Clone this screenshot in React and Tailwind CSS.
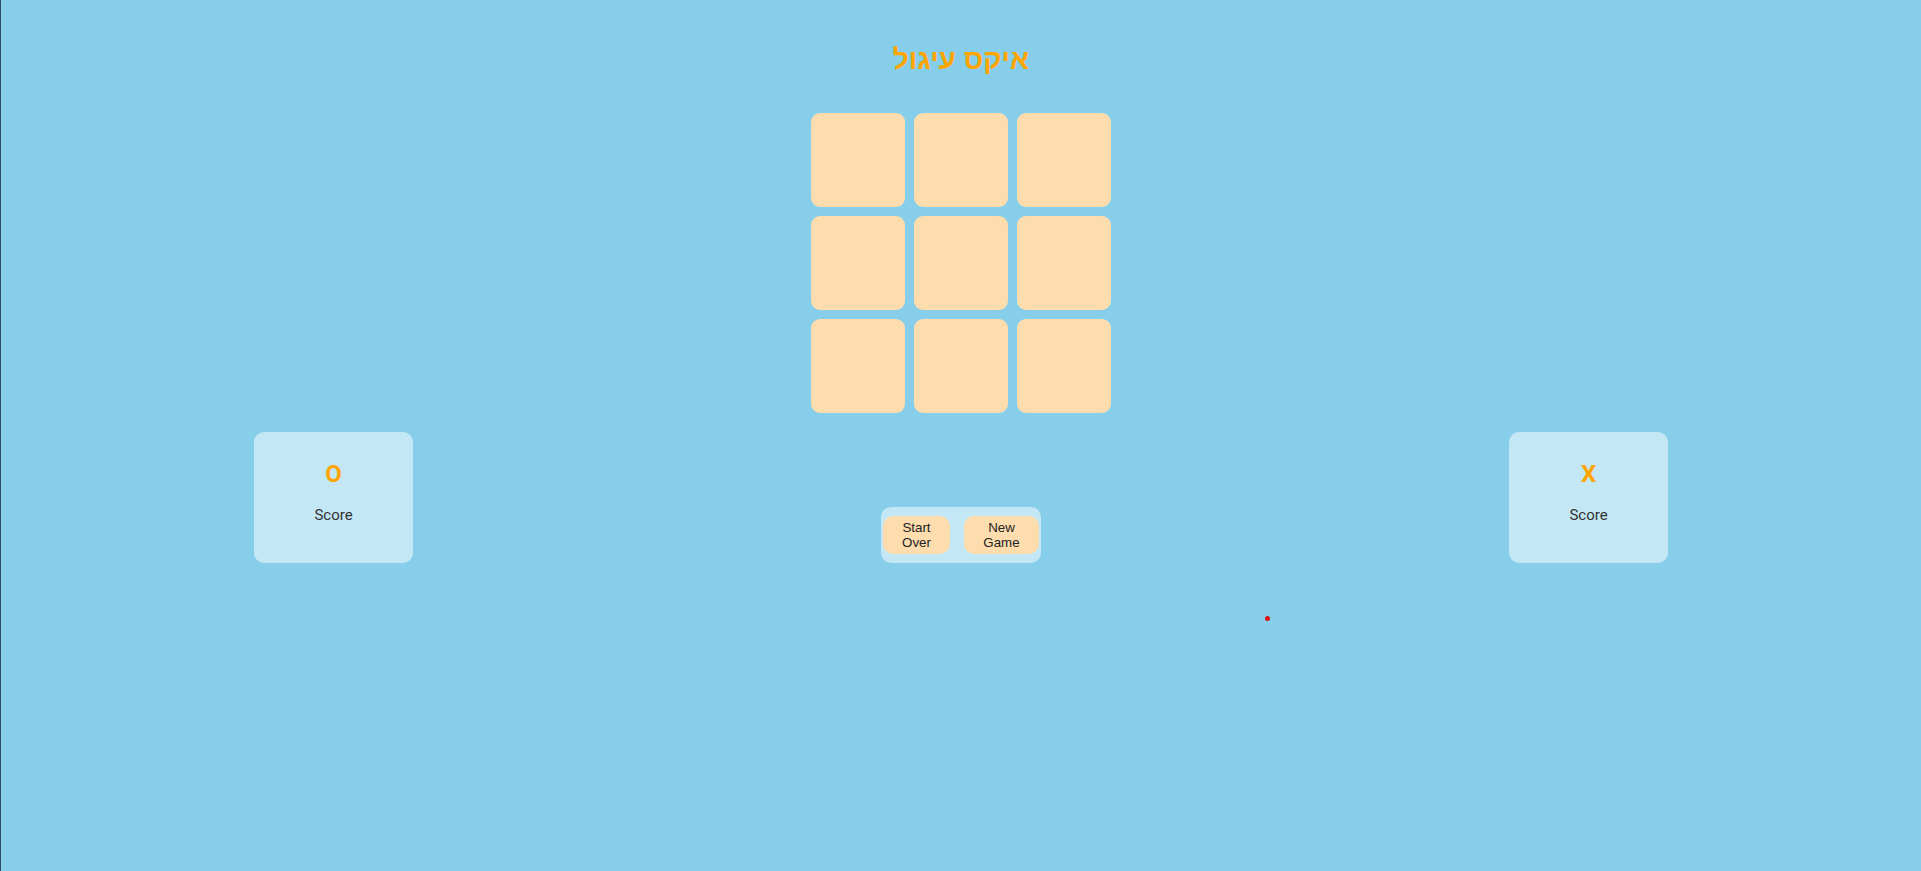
import React from 'react';

const cells = Array.from({ length: 9 });

const ScoreCard = ({ mark }) => (
  <div className="w-[159px] h-[131px] rounded-[10px] bg-white/50 flex flex-col items-center pt-[30px]">
    <div className="text-[24px] leading-[24px] font-bold text-[#FFA500] font-['Roboto',sans-serif]">{mark}</div>
    <div className="mt-[21px] text-[15px] leading-[16px] text-[#333] font-['Roboto',sans-serif]">Score</div>
  </div>
);

export default function App() {
  return (
    <div className="relative min-h-[871px] w-full bg-[#87CEEB] border-l border-[#2d4a66]">
      {/* Title */}
      <h1
        dir="rtl"
        className="pt-[40px] text-center text-[28px] leading-[40px] font-bold text-[#FFA500] font-['Liberation_Sans','Arial',sans-serif]"
      >
        איקס עיגול
      </h1>

      {/* Board */}
      <div className="mt-[33px] mx-auto grid grid-cols-[94px_94px_94px] gap-[9px] w-fit">
        {cells.map((_, i) => (
          <button key={i} className="w-[94px] h-[94px] rounded-[9px] bg-[#FDDDAE]" />
        ))}
      </div>

      {/* Score + controls row */}
      <div className="mt-[19px] mx-auto w-[1414px] flex items-end justify-between">
        <ScoreCard mark="O" />
        <div className="flex items-center gap-[14px] rounded-[10px] bg-white/50 px-[2px] py-[9px]">
          <button className="w-[67px] h-[38px] rounded-[10px] bg-[#FDDDAE] text-[13.33px] leading-[15px] text-[#222] font-['Liberation_Sans',sans-serif]">
            Start<br />Over
          </button>
          <button className="w-[75px] h-[38px] rounded-[10px] bg-[#FDDDAE] text-[13.33px] leading-[15px] text-[#222] font-['Liberation_Sans',sans-serif]">
            New<br />Game
          </button>
        </div>
        <ScoreCard mark="X" />
      </div>

      {/* stray marker */}
      <div className="absolute left-[1264px] top-[616px] w-[5px] h-[5px] rounded-full bg-[#E01010]" />
    </div>
  );
}
